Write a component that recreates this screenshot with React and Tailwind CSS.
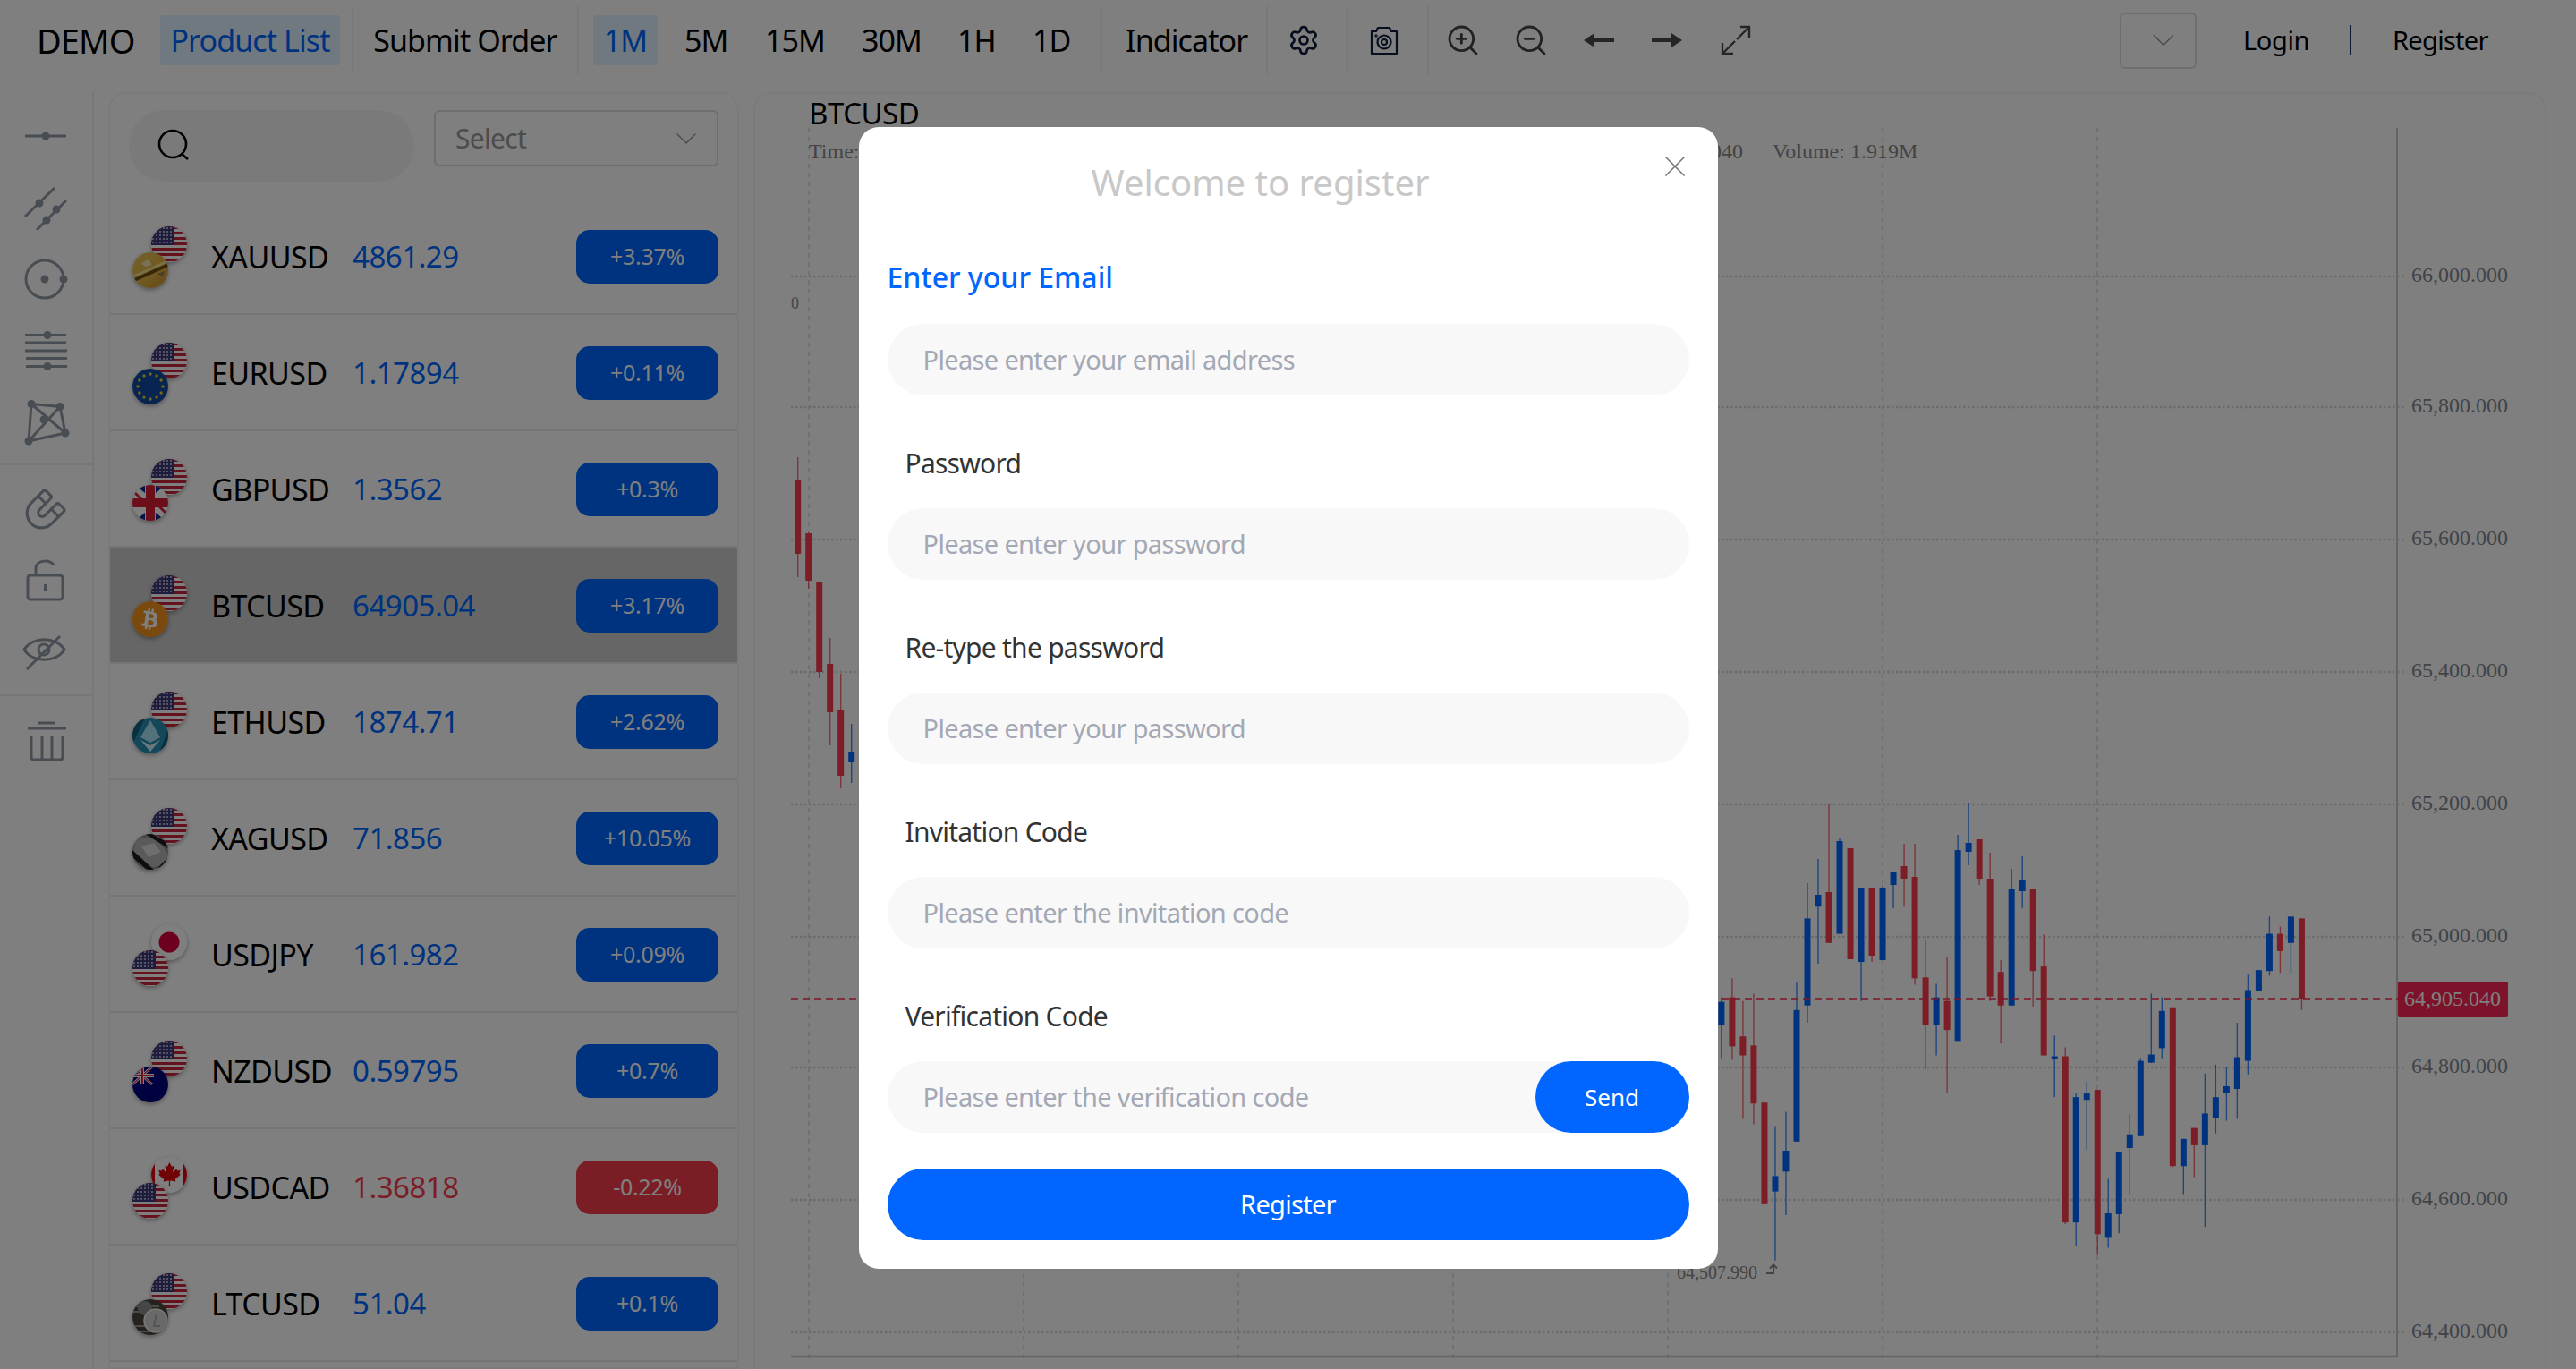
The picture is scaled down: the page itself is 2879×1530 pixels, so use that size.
import React from 'react';
import { Settings, ZoomIn, ZoomOut, ChevronDown, X, Magnet } from 'lucide-react';
import { FaBtc, FaCanadianMapleLeaf } from 'react-icons/fa';

const UI = { fontFamily: '"Noto Sans", sans-serif' };

// --- coins ---
const Us = () => (
    <svg viewBox="0 0 40 40" className="w-full h-full">
        <rect width="40" height="40" fill="#fff" />
        {[0, 6, 12, 18, 24, 30, 36].map(y => <rect key={y} y={y} width="40" height="3" fill="#c8243c" />)}
        <rect width="26" height="21" fill="#3c3b7a" />
        {[2, 6, 10, 14, 18].map(y => [2, 6, 10, 14, 18, 22].map(x => <circle key={x + '-' + y} cx={x} cy={y} r="0.9" fill="#dfe0ee" />))}
    </svg>
);
const Gold = () => (
    <svg viewBox="0 0 40 40" className="w-full h-full">
        <defs>
            <linearGradient id="gold" x1="0" y1="0" x2="1" y2="1">
                <stop offset="0" stopColor="#e8c858" /><stop offset="0.6" stopColor="#e0b040" /><stop offset="1" stopColor="#c49030" />
            </linearGradient>
        </defs>
        <rect width="40" height="40" fill="url(#gold)" />
        <path d="M0 30 L40 12 L40 16 L0 34Z" fill="#6a4c10" />
        <path d="M0 26 L40 8 L40 11 L0 29Z" fill="#f6e08a" />
        <path d="M10 12 l8 -4 l4 6 l-8 2z" fill="#f0e4b0" />
        <path d="M28 24 l8 -3 l-2 6z" fill="#8f7a50" />
    </svg>
);
const Eu = () => (
    <svg viewBox="0 0 40 40" className="w-full h-full">
        <rect width="40" height="40" fill="#0f4aa0" />
        {Array.from({ length: 12 }).map((_, i) => (
            <circle key={i} cx={20 + 14 * Math.cos(i * Math.PI / 6)} cy={20 + 14 * Math.sin(i * Math.PI / 6)} r="1.7" fill="#f5d020" />
        ))}
    </svg>
);
const Uk = () => (
    <svg viewBox="0 0 40 40" className="w-full h-full">
        <rect width="40" height="40" fill="#fff" />
        <path d="M3 0h11v9zM26 0h11l-11 9zM3 40h11v-9zM26 40h11l-11-9z" fill="#0b2a8c" />
        <path d="M0 10l14 10-14 0zM40 10l-14 10 14 0zM0 30l14-10H0zM40 30l-14-10h14z" fill="#fff" />
        <path d="M0 4l12 12h-4l-8-8zM40 36l-12-12h4l8 8z" fill="#d81f35" />
        <rect x="15" width="10" height="40" fill="#d81f35" />
        <rect y="15" width="40" height="10" fill="#d81f35" />
    </svg>
);
const Btc = () => (
    <div className="w-full h-full bg-[#f2931a] flex items-center justify-center text-white"><FaBtc className="size-[24px] rotate-[10deg]" /></div>
);
const Eth = () => (
    <svg viewBox="0 0 40 40" className="w-full h-full">
        <rect width="40" height="40" fill="#2a8fb4" />
        <path d="M0 30 L14 0 L0 0Z M40 12 L30 40 L40 40Z" fill="#14607e" />
        <path d="M20 3 L31 22 L20 28 L9 22Z" fill="#a8e2f2" />
        <path d="M9 25 L20 31 L31 25 L20 38Z" fill="#d4f2fa" />
    </svg>
);
const Silver = () => (
    <svg viewBox="0 0 40 40" className="w-full h-full">
        <rect width="40" height="40" fill="#8c8c8c" />
        <path d="M4 6 L24 2 L40 22 L36 36 L12 38 L0 24Z" fill="#b4b4b4" />
        <path d="M14 0 L40 16 L40 10 L22 0Z M0 18 L24 40 L16 40 L0 26Z M26 40 L40 26 L40 32 L32 40Z" fill="#1c1c1c" />
        <path d="M10 14 L24 10 L32 20 L18 26Z" fill="#dcdcdc" />
    </svg>
);
const Jp = () => (
    <svg viewBox="0 0 40 40" className="w-full h-full">
        <rect width="40" height="40" fill="#fff" />
        <circle cx="20" cy="20" r="11.5" fill="#d8003c" />
    </svg>
);
const Nz = () => (
    <svg viewBox="0 0 40 40" className="w-full h-full">
        <rect width="40" height="40" fill="#00047f" />
        <path d="M0 0L22 20M22 0L0 20" stroke="#fff" strokeWidth="3" />
        <path d="M0 0L22 20M22 0L0 20" stroke="#d8243c" strokeWidth="1.2" />
        <path d="M11 0V20M0 10H24" stroke="#fff" strokeWidth="4" />
        <path d="M11 0V20M0 10H24" stroke="#d8243c" strokeWidth="2" />
    </svg>
);
const Ca = () => (
    <div className="w-full h-full bg-white relative flex items-center justify-center text-[#e0060c]">
        <div className="absolute left-0 inset-y-0 w-[4px] bg-[#e0060c]" />
        <div className="absolute right-0 inset-y-0 w-[4px] bg-[#e0060c]" />
        <FaCanadianMapleLeaf className="size-[27px]" />
    </div>
);
const Ltc = () => (
    <svg viewBox="0 0 40 40" className="w-full h-full">
        <rect width="40" height="40" fill="#4c463e" />
        <path d="M0 8H30M0 14H20M0 30H18M0 36H26" stroke="#9a938a" strokeWidth="2" />
        <circle cx="14" cy="10" r="8" fill="#8c8c8c" />
        <circle cx="26" cy="24" r="13" fill="#d2d2d2" stroke="#f2f2f2" strokeWidth="1.5" />
        <path d="M27 16l-3 14h7" fill="none" stroke="#a8a8a8" strokeWidth="1.8" />
    </svg>
);

const Coin = ({ flag: Flag, className }) => (
    <div className={`absolute size-10 rounded-full overflow-hidden shadow-[0_2px_5px_rgba(0,0,0,0.35)] ${className}`}><Flag /></div>
);

const rows = [
    { sym: 'XAUUSD', price: '4861.29', pct: '+3.37%', top: Us, bottom: Gold },
    { sym: 'EURUSD', price: '1.17894', pct: '+0.11%', top: Us, bottom: Eu },
    { sym: 'GBPUSD', price: '1.3562', pct: '+0.3%', top: Us, bottom: Uk },
    { sym: 'BTCUSD', price: '64905.04', pct: '+3.17%', top: Us, bottom: Btc, active: true },
    { sym: 'ETHUSD', price: '1874.71', pct: '+2.62%', top: Us, bottom: Eth },
    { sym: 'XAGUSD', price: '71.856', pct: '+10.05%', top: Us, bottom: Silver },
    { sym: 'USDJPY', price: '161.982', pct: '+0.09%', top: Jp, bottom: Us },
    { sym: 'NZDUSD', price: '0.59795', pct: '+0.7%', top: Us, bottom: Nz },
    { sym: 'USDCAD', price: '1.36818', pct: '-0.22%', top: Ca, bottom: Us, down: true },
    { sym: 'LTCUSD', price: '51.04', pct: '+0.1%', top: Us, bottom: Ltc },
];

// --- chart data: [up, bodyTop, bodyBottom, wickTop, wickBottom] ---
const leftCandles = [
    [0, 536, 619, 511, 645], [0, 596, 649, 595, 658], [0, 650, 751, 650, 758],
    [0, 742, 796, 713, 833], [0, 794, 867, 753, 881], [1, 840, 852, 809, 875],
];
const rightCandles = [
    [1, 1118, 1143, 1113, 1180], [0, 1113, 1167, 1092, 1182], [0, 1156, 1177, 1117, 1247], [0, 1166, 1230, 1109, 1253],
    [0, 1229, 1341, 1229, 1341], [1, 1310, 1327, 1255, 1403], [1, 1282, 1305, 1239, 1353], [1, 1127, 1272, 1096, 1272],
    [1, 1026, 1122, 987, 1141], [1, 1000, 1013, 960, 1076], [0, 997, 1053, 899, 1053], [1, 940, 1043, 937, 1043],
    [0, 948, 1071, 948, 1071], [1, 992, 1074, 992, 1117], [0, 992, 1067, 992, 1074], [1, 992, 1072, 990, 1072],
    [1, 974, 989, 974, 1015], [0, 968, 982, 943, 1013], [0, 980, 1092, 943, 1099], [0, 1091, 1143, 1050, 1192],
    [1, 1113, 1143, 1098, 1177], [0, 1117, 1149, 1068, 1218], [1, 950, 1161, 933, 1161], [1, 942, 952, 897, 967],
    [0, 938, 982, 938, 989], [0, 982, 1112, 953, 1117], [0, 1085, 1122, 1072, 1164], [1, 994, 1122, 971, 1122],
    [1, 984, 996, 957, 1015], [0, 994, 1084, 994, 1123], [0, 1079, 1177, 1044, 1177], [1, 1178, 1181, 1155, 1223],
    [0, 1178, 1361, 1168, 1363], [1, 1223, 1361, 1218, 1387], [1, 1219, 1226, 1206, 1281], [0, 1215, 1374, 1215, 1397],
    [1, 1351, 1378, 1313, 1389], [1, 1284, 1352, 1284, 1373], [1, 1264, 1279, 1242, 1330], [1, 1183, 1266, 1180, 1266],
    [1, 1176, 1185, 1109, 1185], [1, 1128, 1169, 1113, 1180], [0, 1124, 1299, 1124, 1300], [1, 1269, 1299, 1269, 1330],
    [0, 1257, 1276, 1257, 1311], [1, 1241, 1276, 1197, 1366], [1, 1223, 1246, 1187, 1263], [1, 1211, 1218, 1190, 1249],
    [1, 1179, 1214, 1141, 1247], [1, 1105, 1183, 1088, 1198], [1, 1083, 1106, 1083, 1106], [1, 1043, 1084, 1024, 1089],
    [0, 1043, 1062, 1035, 1086], [1, 1024, 1053, 1024, 1087], [0, 1026, 1115, 1026, 1127],
];
// values past y=1000 were read off a slightly squeezed crop
const fixY = y => (y > 1000 ? 1000 + (y - 1000) * 1.0142 : y);
const candles = [
    ...leftCandles.map((c, i) => [891.7 + i * 12, ...c]),
    ...rightCandles.map(([up, ...ys], i) => [1923.9 + i * 12.01, up, ...ys.map(fixY)]),
];
const gridY = [[309, '66,000.000'], [455, '65,800.000'], [603, '65,600.000'], [751, '65,400.000'], [899, '65,200.000'], [1047, '65,000.000'], [1193, '64,800.000'], [1341, '64,600.000'], [1489, '64,400.000']];
const gridX = [904, 1144, 1384, 1624, 1864, 2104, 2344];

const Chart = () => (
    <svg viewBox="842 103 2037 1427" className="w-[2037px] h-[1427px]" style={{ fontFamily: '"Liberation Serif", serif' }}>
        {gridX.map(x => <line key={x} x1={x} x2={x} y1="143" y2="1522" stroke="#e2e2e2" strokeWidth="2" strokeDasharray="5 5" />)}
        {gridY.map(([y, label]) => (
            <g key={y}>
                <line x1="884" x2="2688" y1={y} y2={y} stroke="#d6d6d6" strokeWidth="2.5" strokeDasharray="2.5 2.5" />
                <text x="2695" y={y + 6} fontSize="24" fill="#83878f">{label}</text>
            </g>
        ))}
        <line x1="2679" x2="2679" y1="143" y2="1517" stroke="#c8c8c8" strokeWidth="2" />
        <line x1="884" x2="2680" y1="1516" y2="1516" stroke="#c8c8c8" strokeWidth="2.5" />
        {candles.map(([x, up, t, b, wt, wb], i) => {
            const c = up ? '#0066ff' : '#fa3a4c';
            return (
                <g key={i}>
                    <line x1={x} x2={x} y1={wt} y2={wb} stroke={c} strokeWidth="1.4" opacity="0.75" />
                    <rect x={x - 3.5} y={t} width="7" height={b - t} fill={c} />
                </g>
            );
        })}
        <line x1="884" x2="2680" y1="1116.500" y2="1116.500" stroke="#fa2a4c" strokeWidth="2.5" strokeDasharray="8 5" />
        <rect x="2680" y="1097" width="123" height="40" rx="2" fill="#fa2655" />
        <text x="2687" y="1124" fontSize="24" fill="#fff">64,905.040</text>
        <text x="904" y="177" fontSize="24" fill="#888">Time:</text>
        <text x="1948" y="177" fontSize="24" fill="#888" textAnchor="end">64,905.040</text>
        <text x="1981" y="177" fontSize="24" fill="#888">Volume: 1.919M</text>
        <text x="884" y="345" fontSize="18" fill="#888">0</text>
        <text x="1964" y="1429" fontSize="20" fill="#888" textAnchor="end">64,507.990</text>
        <path d="M1974 1423h8v-9m-4 3.500l4-4 4 4" fill="none" stroke="#888" strokeWidth="2" />
    </svg>
);

// --- toolbar bits ---
const Sep = () => <div className="w-[2px] h-[76px] bg-[#f0f0f0] shrink-0" />;

const CameraIcon = () => (
    <svg width="34" height="34" viewBox="0 0 34 34" fill="none" stroke="#0a1a3c" strokeWidth="2.2">
        <path d="M3 7h5l2-4h13l2 4h6v25H3z" strokeLinejoin="round" />
        <circle cx="17" cy="19" r="7.5" />
        <circle cx="17" cy="19" r="3" />
        <circle cx="8" cy="12" r="0.6" />
    </svg>
);
const ArrowIcon = ({ flip }) => (
    <svg width="34" height="16" viewBox="0 0 34 16" className={flip ? 'rotate-180' : ''} fill="#4a4a4a">
        <path d="M0 8 L12 0 V6 H34 V10 H12 V16Z" />
    </svg>
);
const ExpandIcon = () => (
    <svg width="34" height="34" viewBox="0 0 34 34" fill="none" stroke="#4a4a4a" strokeWidth="2.4">
        <path d="M18 16L32 2M22 2h10v12M16 18L2 32M2 20v12h12" />
    </svg>
);

const toolIcon = { width: 48, height: 48, viewBox: '0 0 48 48', fill: 'none', stroke: '#919aa8', strokeWidth: 3, className: 'overflow-visible' };
const Dot = ({ x, y, r = 4.500 }) => <circle cx={x} cy={y} r={r} fill="#919aa8" stroke="none" />;
const tools = [
    <svg {...toolIcon}><path d="M0 24H46" /><Dot x={23} y={24} /></svg>,
    <svg {...toolIcon}><path d="M0 34L33 2M13 49L46 16" /><Dot x={16} y={19} /><Dot x={24} y={38} /><Dot x={35} y={26} /></svg>,
    <svg {...toolIcon}><circle cx="22" cy="24" r="21" /><Dot x={22} y={24} /><Dot x={43} y={24} /></svg>,
    <svg {...toolIcon}><path d="M0 6.500H46M0 15H46M0 24H47M1 32.500H47M1 41.500H47" /><Dot x={25} y={6.5} /><Dot x={25} y={41.5} /></svg>,
    <svg {...toolIcon}><path d="M7 3.500L39 6.500L45 36L4 45ZM7 3.500L45 36M39 6.500L4 45" strokeLinejoin="round" /><Dot x={7} y={3.5} /><Dot x={39} y={6.5} /><Dot x={45} y={36} /><Dot x={4} y={45} /><Dot x={21} y={21} /></svg>,
];
const tools2 = [
    <Magnet size={50} strokeWidth={1.5} color="#919aa8" className="rotate-180" />,
    <svg {...toolIcon}><rect x="5" y="21" width="39" height="27" rx="3" /><path d="M14 21V13C14 3 32 3 34 10M24.500 31V38" /></svg>,
    <svg {...toolIcon}><path d="M1 26C10 11 37 11 46 26C37 41 10 41 1 26Z" /><circle cx="23" cy="26" r="6" /><path d="M4 48L41 11" /></svg>,
];
const Trash = () => (
    <svg {...toolIcon}><path d="M3 12H46M15 6H34M7 20V44Q7 47 10 47H39Q42 47 42 44V20M19 20V46M30 20V46" /></svg>
);

// --- modal ---
const Field = ({ label, placeholder, children }) => (
    <>
        {label && <div className="h-[126px] pt-[55px] pl-[20px] text-[30px] leading-[42px] tracking-[-0.75px] text-[#333]">{label}</div>}
        <div className="h-[80px] rounded-full bg-[#f8f8f8] flex items-center">
            <input className="flex-1 min-w-0 h-full bg-transparent pl-[40px] pb-[2px] text-[29px] tracking-[-0.65px] outline-none placeholder:text-[#a3a8b4]" placeholder={placeholder} />
            {children}
        </div>
    </>
);

const RegisterModal = () => (
    <div className="w-[960px] h-[1276px] bg-white rounded-[22px] px-[32px] relative">
        <div className="h-[124px] pr-[62px] flex items-center justify-center text-[40px] leading-[60px] text-[#c8c8c8]">Welcome to register</div>
        <X size={40} strokeWidth={1} color="#777" className="absolute right-[28px] top-[24px]" />
        <div className="mt-[19px] text-[32px] leading-[50px] font-medium text-[#0066ff]">Enter your Email</div>
        <div className="h-[27px]" />
        <Field placeholder="Please enter your email address" />
        <Field label="Password" placeholder="Please enter your password" />
        <Field label="Re-type the password" placeholder="Please enter your password" />
        <Field label="Invitation Code" placeholder="Please enter the invitation code" />
        <Field label="Verification Code" placeholder="Please enter the verification code">
            <button className="w-[172px] h-full rounded-full bg-[#0066ff] text-white text-[26px]">Send</button>
        </Field>
        <button className="mt-[40px] w-full h-[80px] rounded-full bg-[#0066ff] text-white text-[29px] tracking-[-0.7px]">Register</button>
    </div>
);

const App = () => {
    return (
        <div className="w-[2879px] h-[1530px] relative overflow-hidden bg-white text-black" style={UI}>
            {/* Top toolbar */}
            <div className="h-[90px] flex items-center text-[34px] tracking-[-0.9px] pl-[41px]">
                <div className="w-[138px] text-[38px]">DEMO</div>
                <div className="h-[56px] w-[201px] flex items-center justify-center bg-[#e0f2ff] rounded-[3px] text-[#0066ff] mr-[13px]">Product List</div>
                <Sep />
                <div className="w-[250px] text-center">Submit Order</div>
                <Sep />
                <div className="ml-[16px] h-[56px] w-[72px] flex items-center justify-center bg-[#e0f2ff] rounded-[3px] text-[#0066ff]">1M</div>
                <div className="ml-[30px] w-[48px]">5M</div>
                <div className="ml-[42px] w-[65px]">15M</div>
                <div className="ml-[43px] w-[67px]">30M</div>
                <div className="ml-[40px] w-[40px]">1H</div>
                <div className="ml-[44px] w-[41px]">1D</div>
                <div className="ml-[35px] mr-[26px]"><Sep /></div>
                <div className="w-[133px]">Indicator</div>
                <div className="ml-[24px]"><Sep /></div>
                <div className="w-[80px] mr-[8px] flex justify-center"><Settings size={36} strokeWidth={1.8} color="#0a1a3c" /></div>
                <Sep />
                <div className="w-[80px] mr-[8px] flex justify-center"><CameraIcon /></div>
                <Sep />
                <div className="ml-[18px] w-[36px]"><ZoomIn size={40} strokeWidth={1.7} color="#444" /></div>
                <div className="ml-[40px] w-[36px]"><ZoomOut size={40} strokeWidth={1.7} color="#444" /></div>
                <div className="ml-[43px]"><ArrowIcon /></div>
                <div className="ml-[42px]"><ArrowIcon flip /></div>
                <div className="ml-[43px]"><ExpandIcon /></div>
                <div className="ml-auto w-[86px] h-[63px] rounded-[6px] border-2 border-[#dcdce0] flex items-center justify-center pl-[11px]"><ChevronDown size={42} strokeWidth={0.9} color="#999" /></div>
                <div className="ml-[52px] w-[72px] text-[29px] tracking-[-0.4px]">Login</div>
                <div className="ml-[47px] w-[2px] h-[34px] bg-[#123c6c]" />
                <div className="ml-[46px] mr-[99px] w-[106px] text-[29px] tracking-[-0.7px]">Register</div>
            </div>

            {/* Main */}
            <div className="flex mt-[13px] h-[1427px]">
                <div className="w-[105px] shrink-0 border-r-2 border-[#eeeeee] flex flex-col">
                    <div className="flex flex-col items-start pl-[28px] pt-[25px] h-[417px] border-b-2 border-[#eeeeee]">
                        <div className="flex flex-col gap-[32px]">{tools.map((t, i) => <div key={i} className="size-12">{t}</div>)}</div>
                    </div>
                    <div className="h-[258px] pl-[26px] pt-[24px] border-b-2 border-[#eeeeee] flex flex-col gap-[30px]">
                        {tools2.map((t, i) => <div key={i} className="size-12">{t}</div>)}
                    </div>
                    <div className="pl-[28px] pt-[24px]"><Trash /></div>
                </div>

                <div className="ml-[16px] w-[705px] shrink-0 rounded-t-[20px] border-2 border-[#f7f7f7] overflow-hidden">
                    <div className="h-[117px] pt-[18px] pl-[21px] flex items-start">
                        <div className="w-[319px] h-[80px] rounded-full bg-[#f4f4f4] flex items-center pl-[32px]">
                            <svg width="38" height="38" viewBox="0 0 38 38" fill="none" stroke="#000" strokeWidth="2.6"><circle cx="17" cy="17" r="15" /><path d="M27 28l7 6" /></svg>
                        </div>
                        <div className="ml-[22px] w-[318px] h-[63px] rounded-[6px] border-2 border-[#dcdce0] flex items-center justify-between pl-[22px] pr-[14px] text-[30px] tracking-[-0.7px] text-[#999]">
                            Select
                            <ChevronDown size={40} strokeWidth={0.9} color="#999" />
                        </div>
                    </div>
                    {rows.map(r => (
                        <div key={r.sym} className={`flex items-center pl-[25px] pr-[21px] pt-[2px] border-b-2 border-[#ebebeb] h-[130px] ${r.active ? 'bg-[#cccccc]' : ''}`}>
                            <div className="relative w-[88px] h-[69px] shrink-0">
                                <Coin flag={r.top} className="left-[21px] top-0" />
                                <Coin flag={r.bottom} className="left-0 top-[29px]" />
                            </div>
                            <div className="w-[158px] text-[34px] tracking-[-0.6px]">{r.sym}</div>
                            <div className={`flex-1 text-[33px] tracking-[-0.5px] ${r.down ? 'text-[#f93a4a]' : 'text-[#0066ff]'}`}>{r.price}</div>
                            <div className={`w-[159px] h-[60px] rounded-[15px] flex items-center justify-center text-white text-[25px] tracking-[-0.3px] ${r.down ? 'bg-[#f63a48]' : 'bg-[#0066ff]'}`}>{r.pct}</div>
                        </div>
                    ))}
                </div>

                <div className="ml-[16px] flex-1 relative overflow-hidden">
                    <div className="absolute left-[62px] top-[4px] text-[33px] leading-[40px] tracking-[-0.5px]">BTCUSD</div>
                    <div className="absolute left-0 top-0 w-[2004px] h-full rounded-t-[20px] border-2 border-[#f7f7f7] border-b-0" />
                    <Chart />
                </div>
            </div>

            {/* Register dialog */}
            <div className="absolute inset-0 bg-black/50 flex justify-center pt-[142px]">
                <RegisterModal />
            </div>
        </div>
    );
};

export default App;
